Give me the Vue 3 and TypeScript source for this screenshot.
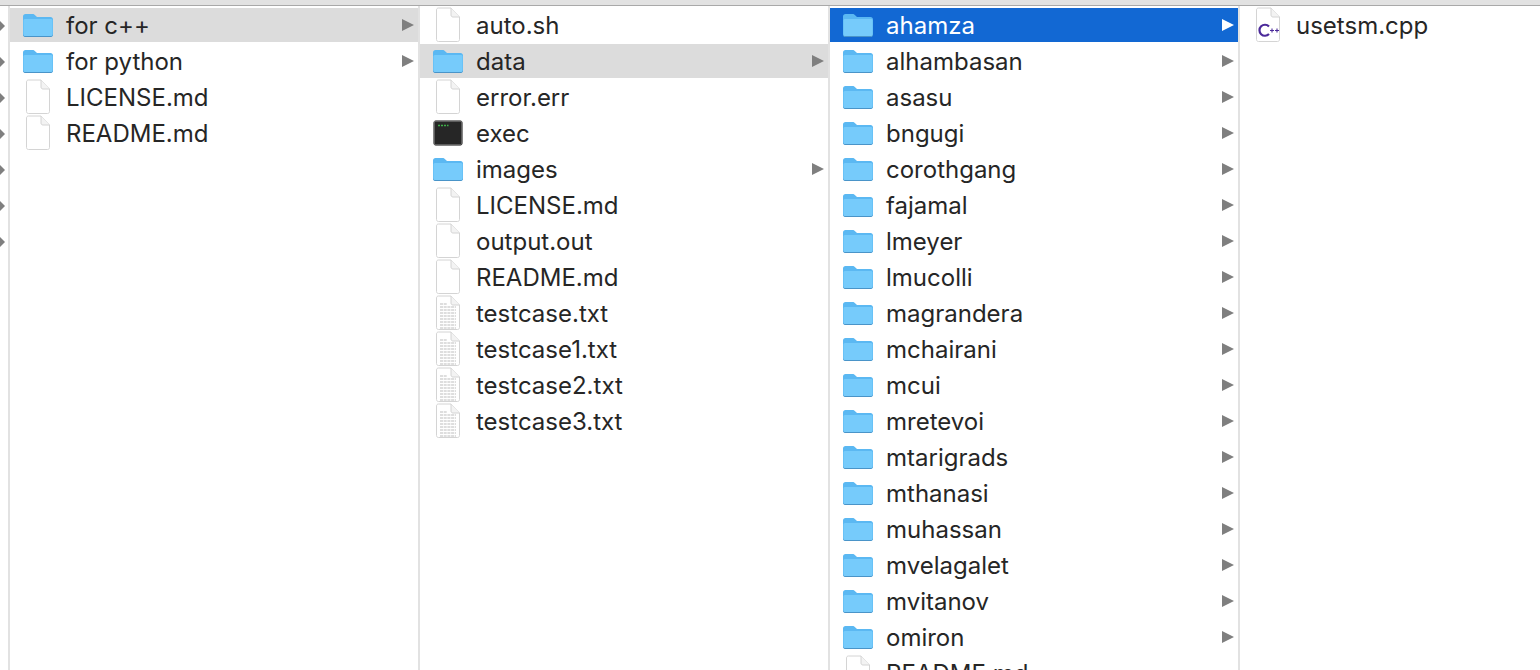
<script setup lang="ts">
type Kind = 'folder' | 'file' | 'text' | 'exec' | 'cpp'

interface Item {
  name: string
  kind: Kind
  state?: 'open' | 'selected'
}

const folder = (name: string, state?: 'open' | 'selected'): Item => ({ name, kind: 'folder', state })
const file = (name: string): Item => ({ name, kind: 'file' })
const text = (name: string): Item => ({ name, kind: 'text' })

const columns: { cls: string; items: Item[] }[] = [
  {
    cls: 'col-a',
    items: [folder('for c++', 'open'), folder('for python'), file('LICENSE.md'), file('README.md')],
  },
  {
    cls: 'col-b',
    items: [
      file('auto.sh'),
      folder('data', 'open'),
      file('error.err'),
      { name: 'exec', kind: 'exec' },
      folder('images'),
      file('LICENSE.md'),
      file('output.out'),
      file('README.md'),
      text('testcase.txt'),
      text('testcase1.txt'),
      text('testcase2.txt'),
      text('testcase3.txt'),
    ],
  },
  {
    cls: 'col-c',
    items: [
      folder('ahamza', 'selected'),
      ...['alhambasan', 'asasu', 'bngugi', 'corothgang', 'fajamal', 'lmeyer', 'lmucolli', 'magrandera',
        'mchairani', 'mcui', 'mretevoi', 'mtarigrads', 'mthanasi', 'muhassan', 'mvelagalet', 'mvitanov',
        'omiron'].map((n) => folder(n)),
      file('README.md'),
    ],
  },
  {
    cls: 'col-d',
    items: [{ name: 'usetsm.cpp', kind: 'cpp' }],
  },
]

const stubArrows = [0, 1, 2, 3, 4, 5, 6]
const textLines = [9, 12, 15, 18, 21, 24, 27, 30, 33]
</script>

<template>
  <div class="finder">
    <div class="titlebar"></div>
    <div class="browser">
      <div class="stub">
        <span v-for="n in stubArrows" :key="n" class="stub-row"><i class="stub-arrow"></i></span>
      </div>
      <div v-for="col in columns" :key="col.cls" class="column" :class="col.cls">
        <div v-for="item in col.items" :key="item.name" class="row" :class="item.state">
          <span class="icon">
            <svg v-if="item.kind === 'folder'" class="folder" width="32" height="26" viewBox="0 0 32 26">
              <path d="M1 4.5C1 3 2 2 3.5 2h7c1.2 0 1.8.4 2.6 1.2L15 5h13.5C30 5 31 6 31 7.5v15c0 1.5-1 2.5-2.5 2.5h-25C2 25 1 24 1 22.500z" fill="#5bb8f2" />
              <path d="M1.500 8.500C1.500 7.500 2.200 7 3 7h26c.8 0 1.500.5 1.500 1.500v14c0 1.200-.8 2-2 2h-25c-1.200 0-2-.8-2-2z" fill="#76cbfb" />
              <path d="M1 22.500c0 1.500 1 2.500 2.500 2.500h25c1.500 0 2.500-1 2.500-2.500v-.5c0 1.400-1 2-2.500 2h-25C2 24 1 23.400 1 22z" fill="#4a94c8" />
            </svg>

            <svg v-else-if="item.kind === 'exec'" width="30" height="26" viewBox="0 0 30 26">
              <rect x="1" y="1" width="28" height="24" rx="1.500" fill="#262626" stroke="#0b0b0b" />
              <rect x="1.500" y="1.500" width="27" height="23" fill="none" stroke="#8a8a8a" stroke-width=".6" />
              <path d="M5 5.500h2M8 5.500h2M11 5.500h2M14 5.500h1.500" stroke="#3fae49" stroke-width="1.600" />
            </svg>

            <svg v-else class="doc" width="26" height="36" viewBox="0 0 26 36">
              <path d="M1.500 3C1.500 1.800 2.300 1 3.500 1H16l8.500 9v22.500c0 1.200-.8 2-2 2h-19c-1.200 0-2-.8-2-2z" fill="#fff" stroke="#d4d4d4" />
              <path d="M16 1v7c0 1.200.8 2 2 2h6.500" fill="#f3f3f3" stroke="#d4d4d4" />
              <template v-if="item.kind === 'text'">
                <path v-for="y in textLines" :key="y" :d="`M5 ${y}h${y === 9 ? 7 : 16}`" stroke="#bdbdbd" stroke-width="1" stroke-dasharray="3 .7" />
              </template>
              <template v-if="item.kind === 'cpp'">
                <path d="M14 19.500a5.500 5.500 0 1 0 0 7.500" fill="none" stroke="#4b2a9a" stroke-width="2.200" />
                <path d="M15 23.500h4M17 21.500v4M20 23.500h4M22 21.500v4" stroke="#4b2a9a" stroke-width="1.100" />
              </template>
            </svg>
          </span>
          <span class="name">{{ item.name }}</span>
          <i v-if="item.kind === 'folder'" class="arrow"></i>
        </div>
      </div>
    </div>
  </div>
</template>

<style scoped>
.finder {
  width: 1540px;
  height: 670px;
  overflow: hidden;
  background: #fff;
  font-family: Inter, "Liberation Sans", sans-serif;
  font-size: 24px;
  color: #262626;
}

.titlebar {
  height: 5px;
  background: #e2e2e2;
  border-bottom: 1px solid #a9a9a9;
}

.browser {
  display: flex;
  height: 664px;
}

.stub {
  width: 8px;
  flex: none;
  padding-top: 2px;
  box-sizing: border-box;
  border-right: 0;
}

.stub-row {
  display: flex;
  align-items: center;
  height: 36px;
}

.stub-arrow {
  width: 0;
  height: 0;
  border-top: 5px solid transparent;
  border-bottom: 5px solid transparent;
  border-left: 5px solid #7f7f7f;
}

.column {
  flex: none;
  box-sizing: border-box;
  padding-top: 2px;
  border-left: 2px solid #e2e2e2;
  overflow: hidden;
}

.col-a, .col-b, .col-c {
  width: 410px;
}

.col-d {
  flex: 1;
}

.row {
  display: flex;
  align-items: center;
  height: 34px;
  margin-bottom: 2px;
}

.row.open {
  background: #dcdcdc;
}

.row.selected {
  background: #1268d3;
  color: #fff;
}

.icon {
  flex: none;
  display: flex;
  align-items: center;
  justify-content: center;
  width: 56px;
  height: 36px;
}

.name {
  flex: 1;
  white-space: nowrap;
}

.arrow {
  flex: none;
  width: 0;
  height: 0;
  margin-right: 4px;
  border-top: 6.500px solid transparent;
  border-bottom: 6.500px solid transparent;
  border-left: 12px solid #7f7f7f;
}

.row.selected .arrow {
  border-left-color: #fff;
}
</style>

<style>
html, body {
  margin: 0;
  overflow: hidden;
  background: #fff;
}
</style>
